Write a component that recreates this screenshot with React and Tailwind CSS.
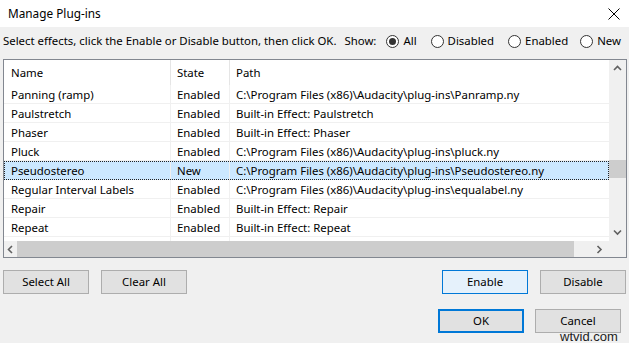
import React from "react";

const rows = [
  ["Panning (ramp)", "Enabled", "C:\\Program Files (x86)\\Audacity\\plug-ins\\Panramp.ny"],
  ["Paulstretch", "Enabled", "Built-in Effect: Paulstretch"],
  ["Phaser", "Enabled", "Built-in Effect: Phaser"],
  ["Pluck", "Enabled", "C:\\Program Files (x86)\\Audacity\\plug-ins\\pluck.ny"],
  ["Pseudostereo", "New", "C:\\Program Files (x86)\\Audacity\\plug-ins\\Pseudostereo.ny", true],
  ["Regular Interval Labels", "Enabled", "C:\\Program Files (x86)\\Audacity\\plug-ins\\equalabel.ny"],
  ["Repair", "Enabled", "Built-in Effect: Repair"],
  ["Repeat", "Enabled", "Built-in Effect: Repeat"],
];

function Radio({ checked, label }) {
  return (
    <div className="flex items-center gap-[4px]">
      <span className="w-[13px] h-[13px] rounded-full border border-[#333] bg-white flex items-center justify-center">
        {checked && <span className="w-[7px] h-[7px] rounded-full bg-[#333]" />}
      </span>
      <span>{label}</span>
    </div>
  );
}

function Chevron({ dir }) {
  const paths = {
    up: "M1 5 L4.5 1.5 L8 5",
    down: "M1 1.5 L4.5 5 L8 1.5",
    left: "M5 1 L1.5 4.5 L5 8",
    right: "M1.5 1 L5 4.5 L1.5 8",
  };
  const vertical = dir === "up" || dir === "down";
  return (
    <svg width={vertical ? 9 : 7} height={vertical ? 7 : 9} viewBox={vertical ? "0 0 9 7" : "0 0 7 9"}>
      <path d={paths[dir]} fill="none" stroke="#606060" strokeWidth="1.6" />
    </svg>
  );
}

function Btn({ children, variant }) {
  const cls =
    variant === "hover"
      ? "border border-[#0078d7] bg-[#e5f1fb]"
      : variant === "default"
      ? "border-2 border-[#0078d7] bg-[#e1e1e1]"
      : "border border-[#adadad] bg-[#e1e1e1]";
  return (
    <div className={`w-[86px] h-[24px] flex items-center justify-center ${cls}`}>{children}</div>
  );
}

export default function App() {
  return (
    <div className="w-[629px] h-[343px] bg-[#f0f0f0] relative overflow-hidden font-['Noto_Sans','Open_Sans',sans-serif] text-[11.4px] leading-none text-black">
      <div className="h-[27px] bg-white flex items-center justify-between pl-[8px] pr-[9px]">
        <span className="text-[11.8px]">Manage Plug-ins</span>
        <svg width="12" height="12" viewBox="0 0 12 12">
          <path d="M0.5 0.5 L11.5 11.5 M11.5 0.5 L0.5 11.5" stroke="#000" strokeWidth="1" fill="none" />
        </svg>
      </div>
      <div className="h-[28px] flex items-center pl-[3px]">
        <span>Select effects, click the Enable or Disable button, then click OK.</span>
        <span className="ml-[8px]">Show:</span>
        <div className="ml-[10px]"><Radio checked label="All" /></div>
        <div className="ml-[14px]"><Radio label="Disabled" /></div>
        <div className="ml-[14px]"><Radio label="Enabled" /></div>
        <div className="ml-[12px]"><Radio label="New" /></div>
      </div>
      <div className="mt-[4px] ml-[3px] w-[624px] h-[199px] border border-[#828790] bg-white flex flex-col">
        <div className="flex h-[181px]">
          <div className="w-[605px] flex flex-col">
            <div className="h-[25px] flex items-center">
              <div className="w-[167px] h-full border-r border-[#e5e5e5] flex items-center pl-[7px]">Name</div>
              <div className="w-[59px] h-full border-r border-[#e5e5e5] flex items-center pl-[6px]">State</div>
              <div className="flex-1 h-full flex items-center pl-[6px]">Path</div>
            </div>
            {rows.map(([n, s, p, sel]) => (
              <div
                key={n}
                className={`h-[19px] flex border-b ${sel ? "bg-[#cce8ff] border-b-0" : "border-[#f0f0f0]"} relative`}
              >
                <div className="w-[167px] h-full border-r border-[#f0f0f0] flex items-center pl-[7px] pt-[1px]">{n}</div>
                <div className="w-[59px] h-full border-r border-[#f0f0f0] flex items-center pl-[6px] pt-[1px]">{s}</div>
                <div className="flex-1 h-full flex items-center pl-[6px] pt-[1px] whitespace-nowrap">{p}</div>
                {sel && <div className="absolute inset-0 border border-dotted border-[#222]" />}
              </div>
            ))}
            <div className="flex-1 flex">
              <div className="w-[167px] h-full border-r border-[#f0f0f0]" />
              <div className="w-[59px] h-full border-r border-[#f0f0f0]" />
            </div>
          </div>
          <div className="w-[17px] bg-[#f0f0f0] flex flex-col items-center">
            <div className="h-[17px] flex items-center justify-center"><Chevron dir="up" /></div>
            <div className="flex-1 w-full flex flex-col pt-[83px]">
              <div className="h-[18px] w-full bg-[#cdcdcd]" />
            </div>
            <div className="h-[17px] flex items-center justify-center"><Chevron dir="down" /></div>
          </div>
        </div>
        <div className="flex h-[16px]">
          <div className="w-[605px] bg-[#f0f0f0] flex items-center">
            <div className="w-[13px] flex items-center justify-center"><Chevron dir="left" /></div>
            <div className="w-[557px] h-full bg-[#cdcdcd]" />
            <div className="flex-1 flex items-center justify-end pr-[6px]"><Chevron dir="right" /></div>
          </div>
          <div className="flex-1 bg-[#f0f0f0]" />
        </div>
      </div>
      <div className="mt-[12px] flex items-center pl-[3px] pr-[3px]">
        <Btn>Select All</Btn>
        <div className="ml-[12px]"><Btn>Clear All</Btn></div>
        <div className="ml-auto"><Btn variant="hover">Enable</Btn></div>
        <div className="ml-[12px]"><Btn>Disable</Btn></div>
      </div>
      <div className="mt-[15px] flex items-center justify-end pr-[8px]">
        <Btn variant="default">OK</Btn>
        <div className="ml-[11px]"><Btn>Cancel</Btn></div>
      </div>
      <div className="absolute left-[560px] top-[330px] font-['Liberation_Sans',sans-serif] text-[13px] leading-none text-[#222]">
        wtvid.com
      </div>
    </div>
  );
}
